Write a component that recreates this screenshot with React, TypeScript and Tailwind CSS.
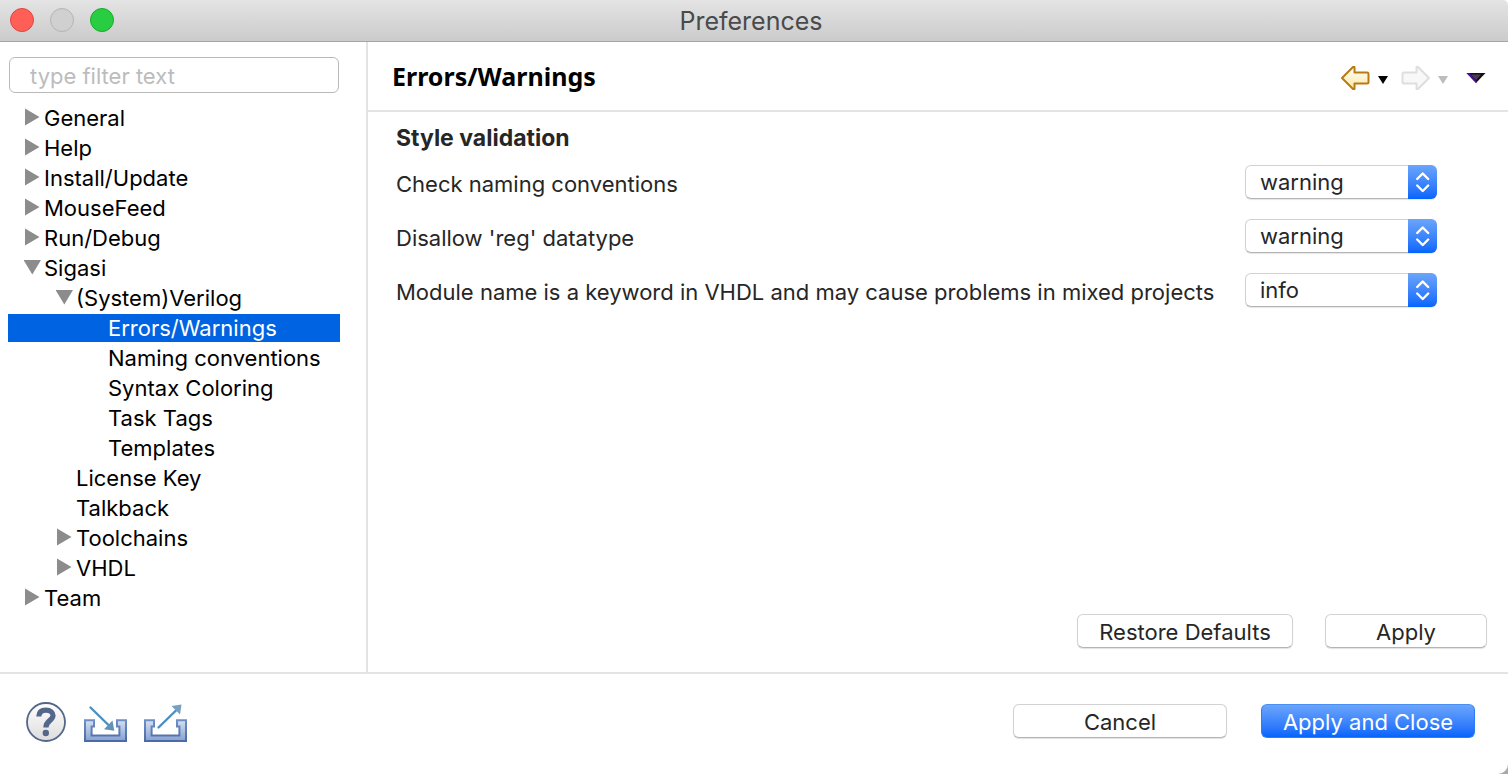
import { useId, useState } from "react";

type TreeItem = {
  label: string;
  depth: 0 | 1 | 2;
  arrow?: "closed" | "open";
};

const tree: TreeItem[] = [
  { label: "General", depth: 0, arrow: "closed" },
  { label: "Help", depth: 0, arrow: "closed" },
  { label: "Install/Update", depth: 0, arrow: "closed" },
  { label: "MouseFeed", depth: 0, arrow: "closed" },
  { label: "Run/Debug", depth: 0, arrow: "closed" },
  { label: "Sigasi", depth: 0, arrow: "open" },
  { label: "(System)Verilog", depth: 1, arrow: "open" },
  { label: "Errors/Warnings", depth: 2 },
  { label: "Naming conventions", depth: 2 },
  { label: "Syntax Coloring", depth: 2 },
  { label: "Task Tags", depth: 2 },
  { label: "Templates", depth: 2 },
  { label: "License Key", depth: 1 },
  { label: "Talkback", depth: 1 },
  { label: "Toolchains", depth: 1, arrow: "closed" },
  { label: "VHDL", depth: 1, arrow: "closed" },
  { label: "Team", depth: 0, arrow: "closed" },
];

const indent = { 0: "pl-4", 1: "pl-12", 2: "pl-20" };

function Disclosure({ state }: { state?: "closed" | "open" }) {
  return (
    <svg className="h-5 w-5 shrink-0" viewBox="0 0 20 20" fill="#8c8c8c" aria-hidden="true">
      {state === "closed" && <path d="M1 0.5V17.5L15.5 9Z" />}
      {state === "open" && <path d="M-0.5 2H17L8.3 16.5Z" />}
    </svg>
  );
}

function TreeRow({ item, selected, onSelect }: { item: TreeItem; selected: boolean; onSelect: () => void }) {
  return (
    <li>
      <button
        type="button"
        onClick={onSelect}
        className={`flex h-7 w-full items-center text-left whitespace-nowrap ${indent[item.depth]} ${
          selected ? "bg-[#0063e1] text-white" : "text-black"
        }`}
      >
        <Disclosure state={item.arrow} />
        {item.label}
      </button>
    </li>
  );
}

function SeverityRow({ label, value }: { label: string; value: string }) {
  const id = useId();
  return (
    <div className="flex items-center justify-between gap-4">
      <label htmlFor={id} className="pt-1">
        {label}
      </label>
      <div className="relative w-48 shrink-0">
        <select
          id={id}
          defaultValue={value}
          className="block h-[34px] w-full appearance-none rounded-md border border-[#d2d2d2] border-b-[#b4b4b4] bg-white pr-8 pl-3.5 text-[#262626] shadow-[0_1px_1px_rgba(0,0,0,0.1)]"
        >
          <option>error</option>
          <option>warning</option>
          <option>info</option>
          <option>ignore</option>
        </select>
        <span className="pointer-events-none absolute inset-y-0 right-0 flex w-[29px] items-center justify-center rounded-r-md bg-linear-to-b from-[#6ba5fb] to-[#0464fc]">
          <svg
            className="h-6 w-4"
            viewBox="0 0 16 24"
            fill="none"
            stroke="white"
            strokeWidth="2.4"
            strokeLinecap="round"
            strokeLinejoin="round"
            aria-hidden="true"
          >
            <path d="M2.2 9L7.7 3.5L13.2 9M2.2 15.5L7.7 21L13.2 15.5" />
          </svg>
        </span>
      </div>
    </div>
  );
}

function PushButton({ children, width, primary }: { children: string; width: string; primary?: boolean }) {
  return (
    <button
      type="button"
      className={`h-[34px] rounded-md border pt-0.5 whitespace-nowrap ${width} ${
        primary
          ? "border-[#2f7df6] border-t-[#4a8ff5] bg-linear-to-b from-[#6ba5fb] to-[#0464fc] text-white"
          : "border-[#d2d2d2] border-b-[#b4b4b4] bg-white text-[#262626] shadow-[0_1px_1px_rgba(0,0,0,0.12)]"
      }`}
    >
      {children}
    </button>
  );
}

function Tray({ out }: { out?: boolean }) {
  const id = out ? "tray-out" : "tray-in";
  return (
    <svg className="h-10 w-11" viewBox="0 0 44 40" aria-hidden="true">
      <defs>
        <linearGradient id={id} x1="0" y1="0" x2="0" y2="1">
          <stop offset="0" stopColor="#d5e0f2" />
          <stop offset="1" stopColor="#86a2d0" />
        </linearGradient>
        <linearGradient id={`${id}-edge`} x1="0" y1="0" x2="0" y2="1">
          <stop offset="0" stopColor="#6f8fc6" />
          <stop offset="1" stopColor="#4c6ba6" />
        </linearGradient>
      </defs>
      <path
        d="M1 18.2H10V24.4H7.6V33.6H35.4V24.4H33V18.2H42V39H1Z"
        fill={`url(#${id})`}
        stroke={`url(#${id}-edge)`}
        strokeWidth="2"
      />
      {out ? (
        <>
          <path d="M14.5 25.5L32.5 8" stroke="#4a8fc0" strokeWidth="2.4" strokeLinecap="round" />
          <path d="M27.5 4L37.5 2.5L36 12.5Z" fill="#74a0c2" />
        </>
      ) : (
        <>
          <path d="M6.5 5.5L26 24.5" stroke="#4a8fc0" strokeWidth="2.4" strokeLinecap="round" />
          <path d="M28.5 18.5L30.3 28.8L20 27.2Z" fill="#6294b6" />
        </>
      )}
    </svg>
  );
}

function HelpIcon() {
  return (
    <svg className="size-10" viewBox="0 0 40 40" aria-hidden="true">
      <defs>
        <linearGradient id="help-fill" x1="0" y1="0" x2="0" y2="1">
          <stop offset="0" stopColor="#ffffff" />
          <stop offset="1" stopColor="#dcdcdc" />
        </linearGradient>
      </defs>
      <circle cx="20" cy="20" r="19" fill="url(#help-fill)" stroke="#53678a" strokeWidth="1.8" />
      <path
        d="M12.8 14.5C13 9.5 16.2 8.2 19.8 8.2C24.5 8.2 27 10.4 27 13.6C27 18.6 19.9 18.4 19.9 25.6"
        fill="none"
        stroke="#53678a"
        strokeWidth="5.2"
      />
      <circle cx="19.8" cy="31" r="3.2" fill="#53678a" />
    </svg>
  );
}

function NavArrow({ forward }: { forward?: boolean }) {
  return (
    <svg className="h-7 w-8" viewBox="0 0 32 28" aria-hidden="true">
      <defs>
        <linearGradient id="back-fill" x1="0" y1="0" x2="0" y2="1">
          <stop offset="0" stopColor="#ffffff" />
          <stop offset="1" stopColor="#fbe7a0" />
        </linearGradient>
      </defs>
      {forward ? (
        <path
          d="M29 14L18 3H16.5V8.5H4Q2.5 8.5 2.5 10V18Q2.5 19.5 4 19.5H16.5V25H18Z"
          fill="#f8f8f8"
          stroke="#dedede"
          strokeWidth="2"
          strokeLinejoin="round"
        />
      ) : (
        <path
          d="M2 14L13 3H14.5V8.5H27Q28.5 8.5 28.5 10V18Q28.5 19.5 27 19.5H14.5V25H13Z"
          fill="url(#back-fill)"
          stroke="#b87a12"
          strokeWidth="2"
          strokeLinejoin="round"
        />
      )}
    </svg>
  );
}

function DropTriangle({ color }: { color: string }) {
  return (
    <svg className="h-2 w-2.5" viewBox="0 0 10 8" aria-hidden="true">
      <path d="M0 0H10L5 8Z" fill={color} />
    </svg>
  );
}

export default function App() {
  const [selected, setSelected] = useState("Errors/Warnings");

  return (
    <div className="bg-linear-to-b from-white to-[#a8a8a8] font-['Inter','Liberation_Sans',sans-serif] text-[22px] leading-7 text-[#262626]">
      <div className="flex min-h-screen flex-col overflow-hidden rounded-tr-[5px] rounded-br-[10px] bg-white">
        <header className="grid h-[42px] shrink-0 grid-cols-[1fr_auto_1fr] items-center border-b border-[#a6a6a6] bg-linear-to-b from-[#e4e4e4] to-[#cbcbcb]">
          <div className="flex gap-4 pb-px pl-2.5">
            <button type="button" aria-label="Close" className="size-6 rounded-full border border-[#e0443e] bg-[#ff5f57]" />
            <button type="button" aria-label="Minimize" className="size-6 rounded-full border border-[#b4b4b4] bg-[#d0d0d0]" />
            <button type="button" aria-label="Zoom" className="size-6 rounded-full border border-[#14ae2b] bg-[#28cd41]" />
          </div>
          <h1 className="pr-1.5 text-[25px] text-[#4a4a4a]">Preferences</h1>
        </header>

        <div className="flex flex-1">
          <aside className="w-[368px] shrink-0 border-r-2 border-[#e3e3e3] pt-[15px] pr-[26px] pl-2">
            <input
              type="text"
              aria-label="type filter text"
              placeholder="type filter text"
              className="mx-px block h-9 w-[330px] rounded-md border border-[#b9b9b9] bg-white px-5 pt-0.5 text-black placeholder:text-[#bcbcbc]"
            />
            <ul className="mt-[11px] flex flex-col gap-0.5">
              {tree.map((item) => (
                <TreeRow
                  key={item.label}
                  item={item}
                  selected={item.label === selected}
                  onSelect={() => setSelected(item.label)}
                />
              ))}
            </ul>
          </aside>

          <main className="flex flex-1 flex-col">
            <div className="flex h-[70px] items-center justify-between border-b-2 border-[#e3e3e3] pr-[22px] pl-6">
              <h2 className="font-['Noto_Sans','Open_Sans',sans-serif] text-[25px] font-bold text-black">
                Errors/Warnings
              </h2>
              <nav className="flex items-center pt-1">
                <button type="button" aria-label="Back">
                  <NavArrow />
                </button>
                <button type="button" aria-label="Back history" className="px-1.5 pt-1">
                  <DropTriangle color="#000000" />
                </button>
                <button type="button" aria-label="Forward" className="ml-1.5">
                  <NavArrow forward />
                </button>
                <button type="button" aria-label="Forward history" className="px-1.5 pt-1">
                  <DropTriangle color="#bdbdbd" />
                </button>
                <button type="button" aria-label="View menu" className="ml-3">
                  <svg className="h-2.5 w-5" viewBox="0 0 20 10" aria-hidden="true">
                    <path d="M0.5 0H19.5L10 10Z" fill="#111111" />
                    <path d="M0.5 0H3.5L11 9L10 10Z" fill="#4b0fa8" />
                    <path d="M5 1.5H15L10 7Z" fill="#4a3a58" />
                  </svg>
                </button>
              </nav>
            </div>

            <section className="flex flex-col gap-5 pt-3 pr-[71px] pl-7">
              <h3 className="-mb-[7px] text-[23px] leading-7 font-bold">Style validation</h3>
              <SeverityRow label="Check naming conventions" value="warning" />
              <SeverityRow label="Disallow 'reg' datatype" value="warning" />
              <SeverityRow
                label="Module name is a keyword in VHDL and may cause problems in mixed projects"
                value="info"
              />
            </section>

            <div className="mt-auto flex justify-end gap-8 pr-[21px] pb-6">
              <PushButton width="w-[216px]">Restore Defaults</PushButton>
              <PushButton width="w-[162px]">Apply</PushButton>
            </div>
          </main>
        </div>

        <footer className="flex h-[102px] shrink-0 items-center justify-between border-t-2 border-[#e3e3e3] pr-[33px] pb-1.5 pl-6.5">
          <div className="flex items-center pt-0.5">
            <button type="button" aria-label="Help">
              <HelpIcon />
            </button>
            <button type="button" aria-label="Import preferences" className="ml-[18px]">
              <Tray />
            </button>
            <button type="button" aria-label="Export preferences" className="ml-4">
              <Tray out />
            </button>
          </div>
          <div className="flex gap-[34px]">
            <PushButton width="w-[214px]">Cancel</PushButton>
            <PushButton width="w-[214px]" primary>
              Apply and Close
            </PushButton>
          </div>
        </footer>
      </div>
    </div>
  );
}
